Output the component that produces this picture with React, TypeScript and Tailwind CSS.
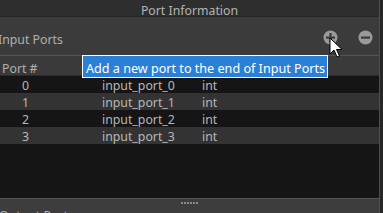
import React from "react";

const rows = [
  { n: "0", name: "input_port_0", type: "int" },
  { n: "1", name: "input_port_1", type: "int" },
  { n: "2", name: "input_port_2", type: "int" },
  { n: "3", name: "input_port_3", type: "int" },
];

function CircleIcon({ plus }: { plus?: boolean }) {
  return (
    <svg width="15" height="15" viewBox="0 0 15 15">
      <circle cx="7.5" cy="7.5" r="7" fill="#9a9a9a" />
      <rect x="3" y="6.5" width="9" height="2.2" fill="#3a3a3a" />
      {plus && <rect x="6.4" y="3" width="2.2" height="9" fill="#3a3a3a" />}
    </svg>
  );
}

export default function App() {
  return (
    <div
      className="relative w-[383px] h-[213px] overflow-hidden flex bg-[#2a2a2a]"
      style={{ fontFamily: '"Noto Sans", "Open Sans", sans-serif' }}
    >
      <div className="w-[379px] h-full flex flex-col">
        <div className="h-[17px] bg-[#2e2e2e] border-b border-[#262626] flex items-start justify-center pt-[5px] text-[12.3px] text-[#b4b4b4] leading-none whitespace-nowrap">
          Port Information
        </div>
        <div className="h-[39px] bg-[#3b3b3b] flex items-center border-b border-[#545454]">
          <span className="ml-[-2px] text-[12.3px] text-[#b0b0b0] leading-none mt-[8px] whitespace-nowrap">Input Ports</span>
          <div className="ml-auto flex items-center gap-[20px] mr-[6px] mt-[2px]">
            <CircleIcon plus />
            <CircleIcon />
          </div>
        </div>
        <div className="h-[20px] bg-[#3a3a3a] flex items-start pt-[7px] text-[12.3px] text-[#b0b0b0] pl-[2px] leading-none border-b border-[#2a2a2a] whitespace-nowrap">
          Port #
        </div>
        <div className="flex-1 bg-[#151515] flex flex-col">
          {rows.map((r, i) => (
            <div
              key={r.n}
              className={`h-[17px] flex items-center pt-[4px] text-[12.3px] text-[#b8b8b8] leading-none whitespace-nowrap ${
                i % 2 === 1 ? "bg-[#333333]" : "bg-[#151515]"
              }`}
            >
              <span className="w-[102px] pl-[22px]">{r.n}</span>
              <span className="w-[100px]">{r.name}</span>
              <span>{r.type}</span>
            </div>
          ))}
        </div>
        <div className="h-[15px] bg-[#3d3d3d] border-t border-[#555555] flex flex-col items-center">
          <div className="flex gap-[1px] mt-[3px]">
            {[0, 1, 2, 3, 4, 5].map((d) => (
              <div key={d} className="w-[2px] h-[2px] bg-[#8a8a8a]" />
            ))}
          </div>
          <span className="self-start ml-[-1px] mt-[6px] text-[12.3px] text-[#b0b0b0] leading-none whitespace-nowrap">Output Ports</span>
        </div>
      </div>
      <div className="w-[1px] h-full bg-[#4e4e4e]" />
      <div className="flex-1 h-full bg-[#262626]" />

      <div className="absolute left-[82px] top-[55px] w-[246px] h-[23px] bg-[#2b7fd6] border border-white flex items-center pt-[6px] pl-[3px] text-[12.6px] text-white leading-none whitespace-nowrap">
        Add a new port to the end of Input Ports
      </div>

      <svg className="absolute left-[329px] top-[37px]" width="16" height="22" viewBox="0 0 16 22">
        <path d="M1 1 L1 17 L5 13 L8 20 L10.5 19 L7.5 12.5 L13 12.5 Z" fill="white" stroke="black" strokeWidth="1" />
      </svg>
    </div>
  );
}
